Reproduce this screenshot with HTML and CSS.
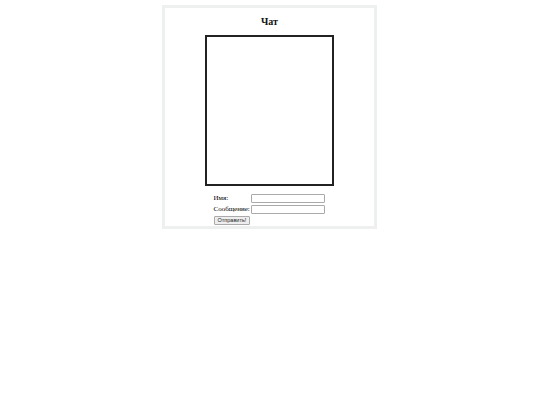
FILE: index.html
```html
<!DOCTYPE html>
<html>
<head>
<meta charset="utf-8">
<link rel="stylesheet" href="styles.css">
</head>
<body>
<div class="wrap">
  <h1 class="title">Чат</h1>
  <div class="chat"></div>
  <form class="form">
    <div class="row"><label class="lbl">Имя:</label><input class="field" type="text"></div>
    <div class="row"><label class="lbl">Сообщение:</label><input class="field" type="text"></div>
    <div class="row"><button class="btn" type="button">Отправить!</button></div>
  </form>
</div>
</body>
</html>
```
FILE: styles.css
```css
html, body { margin: 0; padding: 0; background: #fff; }
body { font-family: "Liberation Serif", serif; color: #111; }
.wrap {
  width: 209px;
  margin: 5px 0 0 162px;
  border: 3px solid #eef0f0;
  padding: 0 0 1px 0;
  display: flex;
  flex-direction: column;
  align-items: center;
}
.title {
  font-size: 10px;
  font-weight: bold;
  margin: 8px 0 7px 0;
  line-height: 12px;
}
.chat {
  width: 125px;
  height: 147px;
  border: 2px solid #222;
}
.form {
  margin: 8px 0 0 0;
  width: 112px;
  display: flex;
  flex-direction: column;
  gap: 2px;
}
.row { display: flex; align-items: center; height: 9px; }
.lbl { width: 37px; flex: none; font-size: 7px; line-height: 9px; color: #000; white-space: nowrap; }
.field {
  width: 72px;
  height: 7px;
  padding: 0;
  margin: 0;
  border: 1px solid #aaa;
  border-radius: 1px;
  box-sizing: content-box;
}
.btn {
  font-family: "Liberation Sans", sans-serif;
  font-size: 5.5px;
  height: 9px;
  padding: 0 3px;
  line-height: 7px;
  border: 1px solid #aaa;
  border-radius: 1px;
  background: #eee;
  color: #222;
}
```
